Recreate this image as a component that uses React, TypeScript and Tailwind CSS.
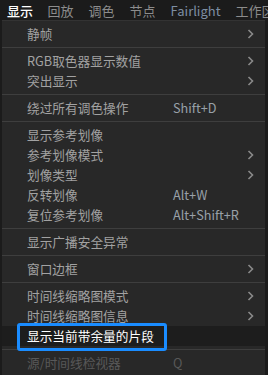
import React from "react";

type Item =
  | { kind: "sep" }
  | { kind: "item"; label: string; shortcut?: string; sub?: boolean; active?: boolean; disabled?: boolean };

const items: Item[] = [
  { kind: "item", label: "静帧", sub: true },
  { kind: "sep" },
  { kind: "item", label: "RGB取色器显示数值", sub: true },
  { kind: "item", label: "突出显示", sub: true },
  { kind: "sep" },
  { kind: "item", label: "绕过所有调色操作", shortcut: "Shift+D" },
  { kind: "sep" },
  { kind: "item", label: "显示参考划像" },
  { kind: "item", label: "参考划像模式", sub: true },
  { kind: "item", label: "划像类型", sub: true },
  { kind: "item", label: "反转划像", shortcut: "Alt+W" },
  { kind: "item", label: "复位参考划像", shortcut: "Alt+Shift+R" },
  { kind: "sep" },
  { kind: "item", label: "显示广播安全异常" },
  { kind: "sep" },
  { kind: "item", label: "窗口边框", sub: true },
  { kind: "sep" },
  { kind: "item", label: "时间线缩略图模式", sub: true },
  { kind: "item", label: "时间线缩略图信息", sub: true },
  { kind: "item", label: "显示当前带余量的片段", active: true },
  { kind: "sep" },
  { kind: "item", label: "源/时间线检视器", shortcut: "Q", disabled: true },
];

function Chevron() {
  return (
    <svg width="7" height="10" viewBox="0 0 7 10" className="block">
      <path d="M1.5 1 L5.5 5 L1.5 9" fill="none" stroke="#8a8a8a" strokeWidth="1.6" />
    </svg>
  );
}

export default function App() {
  return (
    <div
      className="w-[268px] h-[375px] overflow-hidden bg-[#1b1b1b] flex flex-col"
      style={{ fontFamily: '"Noto Sans CJK SC", "Noto Sans", sans-serif' }}
    >
      <div className="h-[20px] flex items-center text-[13px] leading-none text-[#8c8c8c] whitespace-nowrap">
        <span className="px-[7px] text-white font-medium">显示</span>
        <span className="px-[7.5px]">回放</span>
        <span className="px-[7.5px]">调色</span>
        <span className="px-[7.5px]">节点</span>
        <span className="px-[7.5px] text-[#7d8ea3]">Fairlight</span>
        <span className="px-[7.5px]">工作区</span>
      </div>
      <div className="ml-[2px] w-[263px] flex-1 bg-[#282828] border-t border-[#333333] pt-[3px] flex flex-col text-[12.7px] leading-none">
        {items.map((it, i) =>
          it.kind === "sep" ? (
            <div key={i} className="h-[7px] flex items-center">
              <div className="h-px w-full bg-[#3e3e3e]" />
            </div>
          ) : (
            <div
              key={i}
              className={`relative h-[20px] flex items-center pl-[25px] ${it.active ? "bg-[#1d1d1d]" : ""}`}
            >
              {it.active && (
                <span className="absolute left-[15px] top-[-3px] w-[150px] h-[28px] border-[3px] border-[#1a8cff] rounded-[3px]" />
              )}
              <span
                className={`w-[146px] whitespace-nowrap ${
                  it.active ? "text-white relative" : it.disabled ? "text-[#585858]" : "text-[#a2a2a2]"
                }`}
              >
                {it.label}
              </span>
              {it.shortcut && (
                <span className={`whitespace-nowrap ${it.disabled ? "text-[#585858]" : "text-[#98a0a8]"}`}>
                  {it.shortcut}
                </span>
              )}
              {it.sub && (
                <span className="absolute right-[11px] top-[5px]">
                  <Chevron />
                </span>
              )}
            </div>
          )
        )}
      </div>
    </div>
  );
}
